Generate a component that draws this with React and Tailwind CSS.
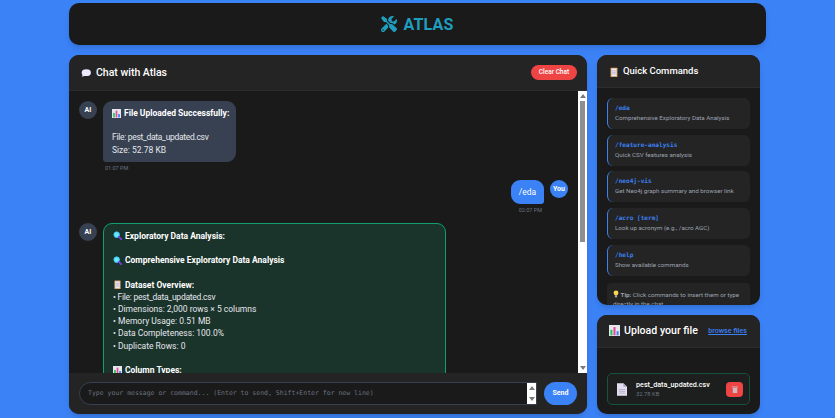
import React from "react";
import { FaTools } from "react-icons/fa";

const BarIcon = ({ size = 9 }) => (
  <svg width={size} height={size} viewBox="0 0 16 16" className="inline-block shrink-0">
    <rect width="16" height="16" fill="#e5e7eb" />
    <rect x="2" y="7" width="3" height="8" fill="#22c55e" />
    <rect x="6.5" y="3" width="3" height="12" fill="#ec4899" />
    <rect x="11" y="9" width="3" height="6" fill="#3b82f6" />
  </svg>
);

const SearchIcon = () => (
  <svg width="9" height="9" viewBox="0 0 16 16" className="inline-block shrink-0">
    <circle cx="6.5" cy="6.5" r="5" fill="#67e8f9" stroke="#38bdf8" strokeWidth="1.5" />
    <path d="M10.5 10.5 15 15" stroke="#7c3aed" strokeWidth="3" strokeLinecap="round" />
  </svg>
);

const ClipboardIcon = ({ size = 10 }) => (
  <svg width={size} height={size} viewBox="0 0 16 16" className="inline-block shrink-0">
    <rect x="2.5" y="1" width="11" height="15" rx="1" fill="#d9a066" />
    <rect x="4" y="2.5" width="8" height="12" fill="#ede9f5" />
    <path d="M5 6h6M5 8.5h6M5 11h6" stroke="#a8a3b5" strokeWidth="1" />
  </svg>
);

const BubbleIcon = () => (
  <svg width="10" height="8" viewBox="0 0 16 13" className="inline-block shrink-0">
    <ellipse cx="8.5" cy="6" rx="7.5" ry="5.5" fill="#ede9fe" />
    <path d="M3 9 1 12.5 7 11z" fill="#ede9fe" />
  </svg>
);

const BulbIcon = () => (
  <svg width="6" height="8" viewBox="0 0 16 20" className="inline-block align-[-1px]">
    <circle cx="8" cy="7" r="6.5" fill="#fcd34d" />
    <rect x="5" y="13" width="6" height="6" fill="#a8a29e" />
  </svg>
);

const Avatar = ({ label, blue }) => (
  <div className={`flex h-[18px] w-[18px] shrink-0 items-center justify-center rounded-full text-[7px] font-bold text-white ${blue ? "bg-[#3b82f6]" : "bg-[#374151]"}`}>
    {label}
  </div>
);

// the page's native scrollbars don't show up headless, so they are drawn
const ScrollBar = ({ thumb }) => (
  <div className="flex w-[9px] shrink-0 flex-col items-center bg-white">
    <svg width="6" height="10" viewBox="0 0 6 10" className="shrink-0" fill="#7a7a7a"><path d="M3 3 6 7H0z" /></svg>
    {thumb && <div className={`w-[5px] shrink-0 bg-[#8f8f8f] ${thumb}`} />}
    <div className="flex-1" />
    <svg width="6" height="10" viewBox="0 0 6 10" className="shrink-0" fill="#7a7a7a"><path d="M3 7 6 3H0z" /></svg>
  </div>
);

const commands = [
  ["/eda", "Comprehensive Exploratory Data Analysis"],
  ["/feature-analysis", "Quick CSV features analysis"],
  ["/neo4j-vis", "Get Neo4j graph summary and browser link"],
  ["/acro [term]", "Look up acronym (e.g., /acro AGC)"],
  ["/help", "Show available commands"],
];

const overview = [
  "• File: pest_data_updated.csv",
  "• Dimensions: 2,000 rows × 5 columns",
  "• Memory Usage: 0.51 MB",
  "• Data Completeness: 100.0%",
  "• Duplicate Rows: 0",
];

export default function App() {
  return (
    <div className="h-[418px] w-[835px] overflow-hidden bg-[#3b82f6] px-[69px] pt-[3px] font-['Roboto',sans-serif]">
      <header className="flex h-[42px] items-center justify-center gap-[6px] rounded-[10px] bg-[#1a1a1a] shadow-md">
        <FaTools className="text-[16px] text-[#1f9fc0]" />
        <h1 className="pt-[2px] text-[16px] font-bold leading-none tracking-[0.2px] text-[#1f9fc0]">ATLAS</h1>
      </header>

      <div className="mt-[10px] flex h-[359px] gap-[10px]">
        <section className="flex w-[518px] flex-col overflow-hidden rounded-[10px] bg-[#1a1a1a] shadow-md">
          <div className="flex h-[36px] shrink-0 items-center justify-between border-b border-[#2d2d2d] bg-[#242424] pl-[12px] pr-[10px]">
            <h2 className="flex items-center gap-[5px] pt-[1px] text-[10.5px] font-medium text-white">
              <BubbleIcon /> Chat with Atlas
            </h2>
            <button className="h-[15px] w-[46px] rounded-full bg-[#ef4444] text-[6.5px] font-medium text-white">Clear Chat</button>
          </div>

          <div className="flex min-h-0 flex-1">
            <div className="min-w-0 flex-1 overflow-hidden px-[10px] pt-[10px] text-[8.5px] leading-[12.2px] text-[#e5e7eb]">
              <div className="flex gap-[6px]">
                <Avatar label="AI" />
                <div>
                  <div className="w-[133px] rounded-[9px] rounded-bl-[3px] bg-[#374151] px-[9px] py-[6px]">
                    <p className="flex items-center gap-[3px] whitespace-nowrap font-bold text-white"><BarIcon /> File Uploaded Successfully:</p>
                    <p className="mt-[12.2px] whitespace-nowrap tracking-[-0.3px]">File: pest_data_updated.csv</p>
                    <p>Size: 52.78 KB</p>
                  </div>
                  <p className="ml-[2px] mt-[2px] text-[5.5px] leading-[8px] text-[#6b7280]">01:07 PM</p>
                </div>
              </div>

              <div className="mt-[8px] flex justify-end gap-[6px]">
                <div className="flex flex-col items-end">
                  <div className="flex h-[24px] w-[33px] items-center justify-center rounded-[9px] rounded-br-[3px] bg-[#3b82f6] text-white">/eda</div>
                  <p className="mr-[2px] mt-[2px] text-[5.5px] leading-[8px] text-[#6b7280]">02:07 PM</p>
                </div>
                <Avatar label="You" blue />
              </div>

              <div className="mt-[9px] flex gap-[6px]">
                <Avatar label="AI" />
                <div className="h-[270px] w-[343px] rounded-[9px] rounded-bl-[3px] border border-[#10a06f] bg-[#1a332b] px-[9px] pt-[6px]">
                  <p className="flex items-center gap-[3px] font-bold text-white"><SearchIcon /> Exploratory Data Analysis:</p>
                  <p className="mt-[12.2px] flex items-center gap-[3px] font-bold text-white"><SearchIcon /> Comprehensive Exploratory Data Analysis</p>
                  <p className="mt-[12.2px] flex items-center gap-[3px] font-bold text-white"><ClipboardIcon size={9} /> Dataset Overview:</p>
                  {overview.map((line, i) => <p key={line} className={i === 0 ? "tracking-[-0.25px]" : ""}>{line}</p>)}
                  <p className="mt-[12.2px] flex items-center gap-[3px] font-bold text-white"><BarIcon /> Column Types:</p>
                </div>
              </div>
            </div>
            <ScrollBar thumb="h-[141px]" />
          </div>

          <div className="flex h-[41px] shrink-0 items-center gap-[7px] bg-[#242424] px-[10px]">
            <div className="flex h-[23px] flex-1 overflow-hidden rounded-[12px] rounded-r-none border border-[#374151] bg-[#1a1a1a]">
              <textarea
                rows={1}
                placeholder="Type your message or command... (Enter to send, Shift+Enter for new line)"
                className="min-w-0 flex-1 resize-none bg-transparent px-[8px] py-[5px] font-['DejaVu_Sans_Mono',monospace] text-[6.5px] leading-[11px] text-white outline-none placeholder:text-[#6b7280]"
              />
              <ScrollBar />
            </div>
            <button className="h-[23px] w-[33px] rounded-full bg-[#3b82f6] text-[7px] font-bold text-white">Send</button>
          </div>
        </section>

        <aside className="flex w-[163px] flex-col gap-[10px]">
          <section className="h-[250px] overflow-hidden rounded-[10px] bg-[#1a1a1a] shadow-md">
            <div className="flex h-[33px] items-center gap-[4px] border-b border-[#2d2d2d] bg-[#242424] px-[12px] pt-[1px] text-[9.5px] font-medium text-white">
              <ClipboardIcon /> Quick Commands
            </div>
            <div className="flex flex-col gap-[5.7px] px-[10px] pt-[10px]">
              {commands.map(([cmd, desc]) => (
                <div key={cmd} className="h-[31px] rounded-[6px] border-l border-[#3b82f6] bg-[#242424] px-[7px] pt-[4px]">
                  <div className="font-['DejaVu_Sans_Mono',monospace] text-[6.1px] font-bold leading-[11px] text-[#3b82f6]">{cmd}</div>
                  <div className="whitespace-nowrap text-[6.2px] leading-[11px] text-[#9ca3af]">{desc}</div>
                </div>
              ))}
              <div className="mt-[2px] rounded-[4px] bg-[#242424] px-[6px] pt-[7px] text-[6.2px] leading-[9px] text-[#9ca3af]">
                <BulbIcon /> <b>Tip:</b> Click commands to insert them or type directly in the chat
              </div>
            </div>
          </section>

          <section className="flex-1 overflow-hidden rounded-[10px] bg-[#1a1a1a] shadow-md">
            <div className="flex h-[33px] items-center justify-between border-b border-[#2d2d2d] bg-[#242424] pl-[12px] pr-[13px]">
              <h3 className="flex items-center gap-[4px] whitespace-nowrap text-[10.6px] font-medium text-white"><BarIcon size={11} /> Upload your file</h3>
              <a href="#" className="whitespace-nowrap text-[7.2px] font-medium text-[#3b82f6] underline">browse files</a>
            </div>
            <div className="px-[10px] pt-[25px]">
              <div className="flex h-[32px] items-center rounded-[5px] border border-[#14533f] bg-[#1c1f1e] pl-[9px] pr-[6px]">
                <svg width="10" height="13" viewBox="0 0 11 14" className="shrink-0">
                  <path d="M0 0h7l4 4v10H0z" fill="#e4dff0" />
                  <path d="M7 0v4h4z" fill="#a79fc0" />
                  <path d="M2 7h7M2 9h7M2 11h7" stroke="#a79fc0" strokeWidth=".8" />
                </svg>
                <div className="ml-[9px] flex-1">
                  <div className="whitespace-nowrap text-[7.2px] font-medium leading-[10px] text-white">pest_data_updated.csv</div>
                  <div className="text-[5.8px] leading-[9px] text-[#6b7280]">32.78 KB</div>
                </div>
                <button className="flex h-[15px] w-[17px] items-center justify-center rounded-[4px] bg-[#ef4444]">
                  <svg width="6" height="7" viewBox="0 0 6 7" fill="#d1b8c0">
                    <path d="M0 .5h6v1H0zM.8 2h4.4v5H.8z" />
                  </svg>
                </button>
              </div>
            </div>
          </section>
        </aside>
      </div>
    </div>
  );
}
